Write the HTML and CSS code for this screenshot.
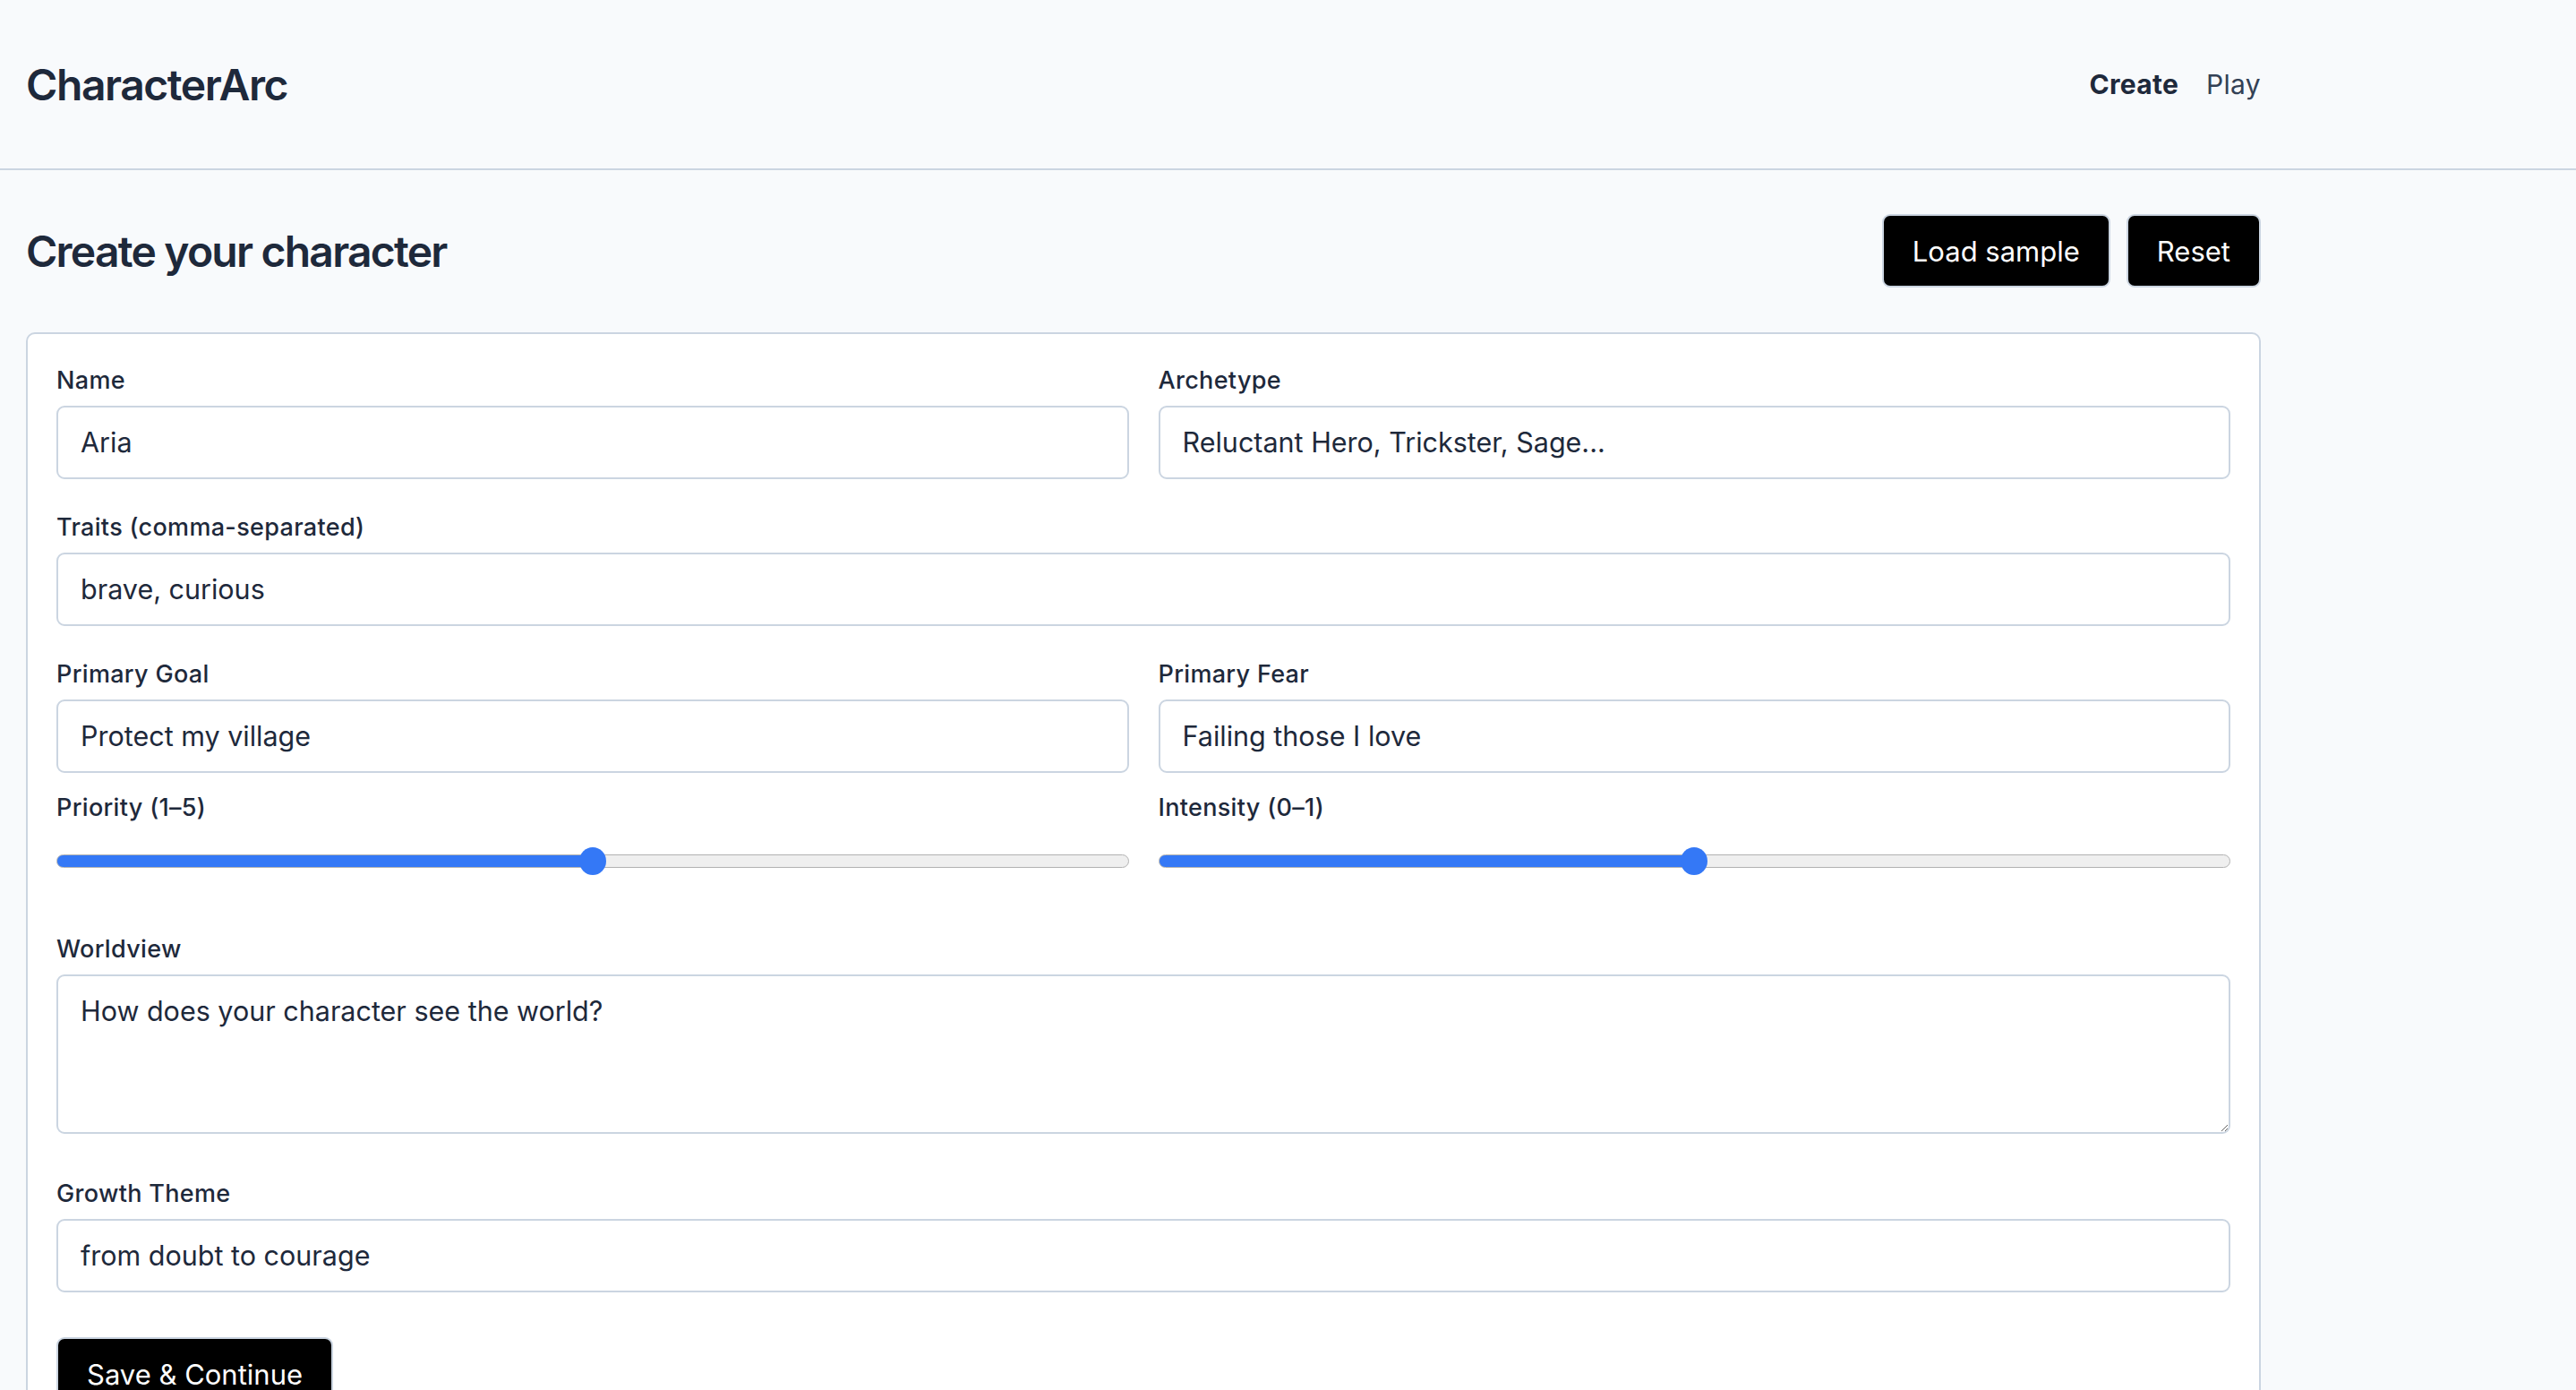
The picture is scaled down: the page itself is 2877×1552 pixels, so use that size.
FILE: index.html
```html
<!DOCTYPE html>
<html lang="en">
<head>
    <meta charset="UTF-8">
    <meta name="viewport" content="width=device-width, initial-scale=1.0">
    <title>CharacterArc</title>
    <link rel="stylesheet" href="styles.css">
</head>
<body>
    <header class="site-header">
        <div class="container header-inner">
            <a class="logo" href="#">CharacterArc</a>
            <nav class="nav">
                <a href="#" class="nav-link active">Create</a>
                <a href="#" class="nav-link">Play</a>
            </nav>
        </div>
    </header>

    <main class="container page">
        <div class="page-head">
            <h1>Create your character</h1>
            <div class="actions">
                <button type="button" class="btn">Load sample</button>
                <button type="button" class="btn">Reset</button>
            </div>
        </div>

        <form class="card form">
            <div class="grid">
                <div class="field">
                    <label for="name">Name</label>
                    <input type="text" id="name" value="Aria">
                </div>
                <div class="field">
                    <label for="archetype">Archetype</label>
                    <input type="text" id="archetype" placeholder="Reluctant Hero, Trickster, Sage...">
                </div>
            </div>

            <div class="field">
                <label for="traits">Traits (comma-separated)</label>
                <input type="text" id="traits" value="brave, curious">
            </div>

            <div class="grid grid-tight">
                <div class="field">
                    <label for="goal">Primary Goal</label>
                    <input type="text" id="goal" value="Protect my village">
                </div>
                <div class="field">
                    <label for="fear">Primary Fear</label>
                    <input type="text" id="fear" value="Failing those I love">
                </div>
                <div class="field">
                    <label for="priority">Priority (1–5)</label>
                    <input type="range" id="priority" class="range" min="1" max="5" step="1" value="3" style="--fill: 50%">
                </div>
                <div class="field">
                    <label for="intensity">Intensity (0–1)</label>
                    <input type="range" id="intensity" class="range" min="0" max="1" step="0.01" value="0.5" style="--fill: 50%">
                </div>
            </div>

            <div class="field">
                <label for="worldview">Worldview</label>
                <textarea id="worldview" placeholder="How does your character see the world?"></textarea>
            </div>

            <div class="field">
                <label for="growth">Growth Theme</label>
                <input type="text" id="growth" value="from doubt to courage">
            </div>

            <div class="form-footer">
                <button type="submit" class="btn">Save &amp; Continue</button>
            </div>
        </form>
    </main>
</body>
</html>
```

FILE: styles.css
```css
* {
    box-sizing: border-box;
}
body {
    margin: 0;
    font-family: Inter, "Noto Sans", Arial, sans-serif;
    background-color: #f8fafc;
    color: #1e293b;
}
a {
    color: inherit;
    text-decoration: none;
}
.container {
    max-width: 2554px;
    padding: 0 29px;
}

/* top bar */
.site-header {
    border-bottom: 2px solid #cbd5e1;
}
.header-inner {
    height: 188px;
    display: flex;
    align-items: center;
    justify-content: space-between;
}
.logo {
    font-size: 48px;
    font-weight: 600;
    letter-spacing: -0.03em;
}
.nav {
    display: flex;
    gap: 31px;
    font-size: 30px;
    letter-spacing: 0.01em;
}
.nav-link {
    color: #334155;
}
.nav-link.active {
    color: #1e293b;
    font-weight: 700;
}

/* page heading */
.page {
    padding-top: 49px;
}
.page-head {
    display: flex;
    align-items: center;
    justify-content: space-between;
    margin-bottom: 50px;
}
.page-head h1 {
    margin: 0;
    font-size: 48px;
    font-weight: 600;
    letter-spacing: -0.037em;
}
.actions {
    display: flex;
    gap: 18px;
}
.btn {
    height: 82px;
    padding: 0 32px;
    background: #000;
    color: #fff;
    border: 2px solid #cbd5e1;
    border-radius: 9px;
    font-family: inherit;
    font-size: 31px;
    cursor: pointer;
}

/* form card */
.card {
    background: #fff;
    border: 2px solid #cbd5e1;
    border-radius: 10px;
    padding: 33px 32px;
}
.form {
    display: flex;
    flex-direction: column;
    gap: 35px;
}
.grid {
    display: grid;
    grid-template-columns: 1fr 1fr;
    column-gap: 33px;
    row-gap: 35px;
}
.grid-tight {
    row-gap: 20px;
}
.field label {
    display: block;
    font-size: 27px;
    font-weight: 500;
    letter-spacing: 0.012em;
    line-height: 37px;
    margin-bottom: 10px;
}
.field input[type="text"],
.field textarea {
    display: block;
    width: 100%;
    padding: 17px 25px;
    border: 2px solid #cbd5e1;
    border-radius: 9px;
    background: #fff;
    color: #1e293b;
    font-family: inherit;
    font-size: 30.5px;
    line-height: 44px;
}
.field input::placeholder,
.field textarea::placeholder {
    color: #1e293b;
    opacity: 1;
}
.field textarea {
    height: 178px;
    margin-bottom: 13px;
    resize: vertical;
}

/* sliders */
.range {
    -webkit-appearance: none;
    appearance: none;
    display: block;
    width: 100%;
    height: 31px;
    margin: 26px 0 29px;
    background: transparent;
}
.range::-webkit-slider-runnable-track {
    height: 15px;
    border: 1.5px solid #b2b2b2;
    border-radius: 8px;
    background: linear-gradient(to right, #3478f6 var(--fill), #efefef var(--fill));
}
.range::-webkit-slider-thumb {
    -webkit-appearance: none;
    width: 30px;
    height: 31px;
    margin-top: -9.5px;
    border: none;
    border-radius: 50%;
    background: #3478f6;
}

.form-footer {
    margin-top: 15px;
}
```
